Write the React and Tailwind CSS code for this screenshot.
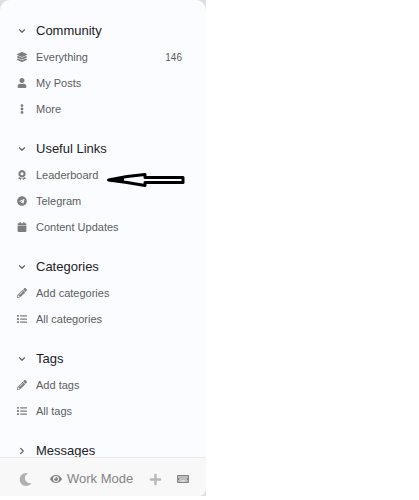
import React, { useState } from 'react';
import {
  FaCalendar,
  FaEllipsisV,
  FaEye,
  FaKeyboard,
  FaLayerGroup,
  FaList,
  FaMoon,
  FaPencilAlt,
  FaPlus,
  FaTelegram,
  FaUser,
} from 'react-icons/fa';
import { FaAward } from 'react-icons/fa6';
import { ChevronDown, ChevronRight } from 'lucide-react';

const SECTIONS = [
  {
    title: 'Community',
    open: true,
    links: [
      { label: 'Everything', icon: FaLayerGroup, count: 146 },
      { label: 'My Posts', icon: FaUser },
      { label: 'More', icon: FaEllipsisV },
    ],
  },
  {
    title: 'Useful Links',
    open: true,
    links: [
      { label: 'Leaderboard', icon: FaAward, pointed: true },
      { label: 'Telegram', icon: FaTelegram },
      { label: 'Content Updates', icon: FaCalendar },
    ],
  },
  {
    title: 'Categories',
    open: true,
    links: [
      { label: 'Add categories', icon: FaPencilAlt },
      { label: 'All categories', icon: FaList },
    ],
  },
  {
    title: 'Tags',
    open: true,
    links: [
      { label: 'Add tags', icon: FaPencilAlt },
      { label: 'All tags', icon: FaList },
    ],
  },
  { title: 'Messages', open: false, links: [{ label: 'Inbox', icon: FaUser }] },
];

function PointerArrow() {
  return (
    <svg
      className="absolute left-[106px] top-2 h-[18px] w-20"
      viewBox="0 0 80 18"
      fill="none"
      stroke="#000"
      strokeWidth="3"
      strokeLinejoin="round"
      aria-hidden="true"
    >
      <path d="M2.5 10 L21 6.5 L39 4.5 V7.5 H77 V12.5 H39 V15.5 L21 12.5 Z" />
      <path d="M2 10 L18 7 V12.5 L4 11 Z" fill="#000" stroke="none" />
    </svg>
  );
}

function SidebarLink({ label, icon: Icon, count, pointed }) {
  return (
    <li className="relative">
      <a href="#" className="flex h-[26px] items-center pl-4 pr-6 text-[#5c5d60]">
        <Icon className="mr-2 h-[10px] w-3 shrink-0 text-[#7c7d7f]" />
        <span className="text-[11px]">{label}</span>
        {count && <span className="ml-auto text-[10px]">{count}</span>}
      </a>
      {pointed && <PointerArrow />}
    </li>
  );
}

function SidebarSection({ title, open: initialOpen, links }) {
  const [open, setOpen] = useState(initialOpen);
  const Chevron = open ? ChevronDown : ChevronRight;

  return (
    <section>
      <button
        type="button"
        className="flex h-[26px] w-full items-center pl-4 text-[13px] text-[#222]"
        aria-expanded={open}
        onClick={() => setOpen(!open)}
      >
        <Chevron className="mr-2 h-[10px] w-3 shrink-0 text-[#666]" strokeWidth={3} />
        {title}
      </button>
      {open && (
        <ul>
          {links.map((link) => (
            <SidebarLink key={link.label} {...link} />
          ))}
        </ul>
      )}
    </section>
  );
}

function SidebarFooter() {
  return (
    <footer className="flex h-[39px] shrink-0 items-center border-t border-[#e9e9e9] bg-[#f8f8f8] pl-[19px] pr-[17px] pt-1 text-[#858585]">
      <button type="button" aria-label="Toggle dark mode">
        <FaMoon className="h-[13px] w-[13px] text-[#b0b0b0]" />
      </button>
      <button type="button" className="ml-[18px] flex items-center gap-[5px] text-[13px]">
        <FaEye className="h-3 w-3" />
        Work Mode
      </button>
      <button type="button" className="ml-auto" aria-label="New section">
        <FaPlus className="h-[13px] w-[13px] text-[#b8b8b8]" />
      </button>
      <button type="button" className="ml-[15px]" aria-label="Keyboard shortcuts">
        <FaKeyboard className="h-3 w-3" />
      </button>
    </footer>
  );
}

export default function App() {
  return (
    <div className="h-screen bg-white pb-1 font-['Liberation_Sans',Arial,sans-serif]">
      <div className="h-full w-[206px] bg-[#dedfe1]">
        <aside className="flex h-full flex-col overflow-hidden rounded-t-[10px] rounded-br-[8px] bg-[#fbfcff]">
          <nav className="flex min-h-0 flex-1 flex-col gap-[14px] overflow-hidden pt-[18px]">
            {SECTIONS.map((section) => (
              <SidebarSection key={section.title} {...section} />
            ))}
          </nav>
          <SidebarFooter />
        </aside>
      </div>
    </div>
  );
}
